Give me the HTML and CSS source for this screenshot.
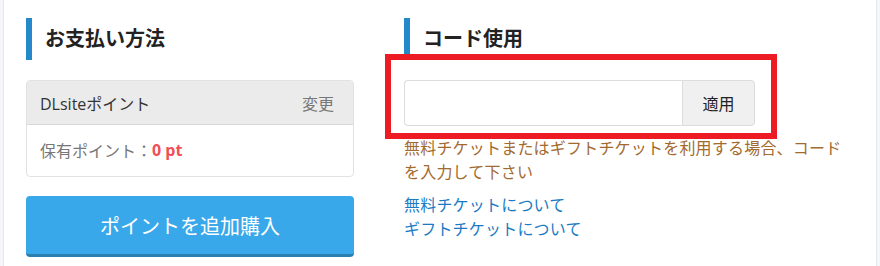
FILE: index.html
```html
<!DOCTYPE html>
<html lang="ja">
<head>
<meta charset="utf-8">
<link rel="stylesheet" href="styles.css">
</head>
<body>
<div class="page">
  <div class="main">
    <section class="col col-left">
      <h2 class="heading">お支払い方法</h2>
      <div class="panel">
        <div class="panel-head">
          <span class="panel-title">DLsiteポイント</span>
          <span class="panel-change">変更</span>
        </div>
        <div class="panel-body">
          <span class="label">保有ポイント：</span><span class="points">0 pt</span>
        </div>
      </div>
      <button class="buy-btn">ポイントを追加購入</button>
    </section>
    <section class="col col-right">
      <h2 class="heading">コード使用</h2>
      <div class="input-group">
        <input class="code-input" type="text">
        <button class="apply-btn">適用</button>
      </div>
      <p class="hint">無料チケットまたはギフトチケットを利用する場合、コードを入力して下さい</p>
      <div class="links">
        <a class="link" href="#">無料チケットについて</a>
        <a class="link" href="#">ギフトチケットについて</a>
      </div>
      <div class="highlight"></div>
    </section>
  </div>
</div>
</body>
</html>
```
FILE: styles.css
```css
* { box-sizing: border-box; }
html, body {
  margin: 0;
  padding: 0;
  background: #f4f6f9;
  font-family: "Open Sans", "Noto Sans CJK JP", sans-serif;
}
.page {
  display: flex;
  height: 266px;
  padding: 0 3px;
}
.main {
  flex: 1;
  display: flex;
  gap: 50px;
  background: #fff;
  border-left: 1px solid #e3e7ec;
  border-right: 1px solid #e3e7ec;
  padding-left: 22px;
}
.col-left { width: 328px; }
.col-right { width: 446px; position: relative; }
.heading {
  margin: 18px 0 0;
  height: 42px;
  border-left: 6px solid #2389cb;
  padding-left: 13px;
  font-size: 20px;
  font-weight: bold;
  line-height: 42px;
  color: #222;
}
.panel {
  margin-top: 20px;
  border: 1px solid #e2e2e2;
  border-radius: 4px;
  overflow: hidden;
}
.panel-head {
  display: flex;
  justify-content: space-between;
  align-items: center;
  height: 44px;
  background: #ebebeb;
  border-bottom: 1px solid #d8d8d8;
  padding: 0 19px 0 13px;
  font-size: 16px;
}
.panel-title { color: #333; }
.panel-change { color: #777; }
.panel-body {
  height: 51px;
  display: flex;
  align-items: center;
  padding: 0 13px 2px;
  font-size: 16px;
}
.label { color: #777; }
.points { color: #f04e55; font-weight: bold; }
.buy-btn {
  display: block;
  width: 100%;
  margin-top: 19px;
  height: 61px;
  background: #38a8ea;
  border: none;
  border-bottom: 3px solid #2b7fae;
  border-radius: 4px;
  color: #fff;
  font-family: inherit;
  font-size: 20px;
  padding: 0;
}
.input-group {
  display: flex;
  margin-top: 20px;
  width: 351px;
  height: 46px;
}
.code-input {
  flex: 1;
  min-width: 0;
  border: 1px solid #dcdcdc;
  border-right: none;
  border-radius: 4px 0 0 4px;
  background: #fff;
}
.apply-btn {
  width: 73px;
  border: 1px solid #dcdcdc;
  border-radius: 0 4px 4px 0;
  background: #f0f0f0;
  color: #222;
  font-family: inherit;
  font-size: 16px;
  padding: 0;
}
.hint {
  margin: 10px 0 0;
  font-size: 16px;
  line-height: 24px;
  letter-spacing: 0.2px;
  color: #a36a2e;
}
.links {
  margin-top: 9px;
  display: flex;
  flex-direction: column;
}
.link {
  font-size: 16px;
  line-height: 24px;
  letter-spacing: 0.2px;
  color: #1a7bc4;
  text-decoration: none;
}
.highlight {
  position: absolute;
  left: -19px;
  top: 54px;
  width: 392px;
  height: 85px;
  border: 6px solid #ed1c24;
  pointer-events: none;
}
```
